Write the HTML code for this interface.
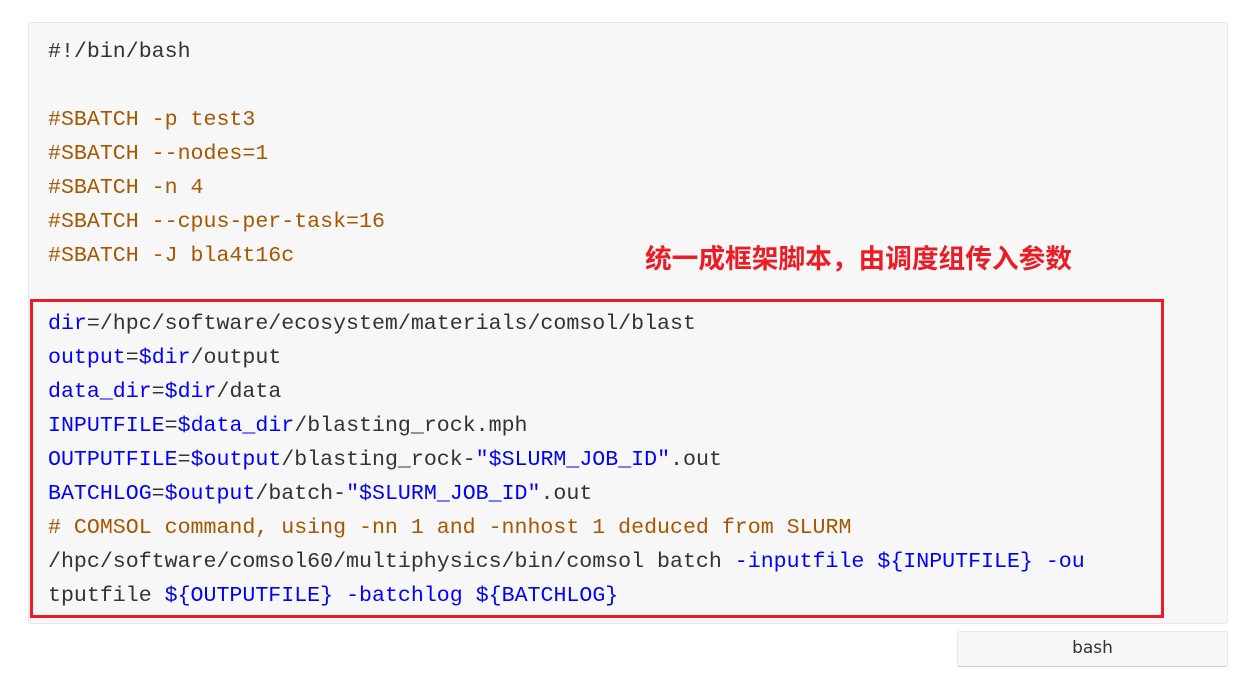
<!DOCTYPE html>
<html><head><meta charset="utf-8"><style>
body{margin:0;background:#fff;width:1239px;height:675px;position:relative;overflow:hidden}
.code{position:absolute;left:28px;top:22px;width:1198px;height:600px;background:#f7f7f7;border:1px solid #e6e6e6;border-radius:3px}
pre{margin:0;position:absolute;left:19px;top:12px;font-family:"Liberation Mono",monospace;font-size:21.6px;line-height:34px;color:#333}
.c{color:#a65700}.b{color:#0000ff}
.box{position:absolute;left:30px;top:299px;width:1128px;height:313px;border:3px solid #ed1c24}
.note{position:absolute;left:645px;top:237px;font-family:"Liberation Sans","Noto Sans CJK SC",sans-serif;font-weight:bold;font-size:26.7px;color:#ed1c24;text-shadow:0 0 2px #fff;white-space:nowrap;letter-spacing:0}
.btn{position:absolute;left:957px;top:631px;width:269px;height:34px;background:#f7f7f7;border:1px solid #e6e6e6;border-bottom-color:#c8cccc;border-radius:3px;font-family:"DejaVu Sans",sans-serif;font-size:17px;color:#333;text-align:center;line-height:33px}
</style></head><body>
<div class="code"><pre>#!/bin/bash

<span class="c">#SBATCH -p test3</span>
<span class="c">#SBATCH --nodes=1</span>
<span class="c">#SBATCH -n 4</span>
<span class="c">#SBATCH --cpus-per-task=16</span>
<span class="c">#SBATCH -J bla4t16c</span>

<span class="b">dir</span>=/hpc/software/ecosystem/materials/comsol/blast
<span class="b">output</span>=<span class="b">$dir</span>/output
<span class="b">data_dir</span>=<span class="b">$dir</span>/data
<span class="b">INPUTFILE</span>=<span class="b">$data_dir</span>/blasting_rock.mph
<span class="b">OUTPUTFILE</span>=<span class="b">$output</span>/blasting_rock-<span class="b">"$SLURM_JOB_ID"</span>.out
<span class="b">BATCHLOG</span>=<span class="b">$output</span>/batch-<span class="b">"$SLURM_JOB_ID"</span>.out
<span class="c"># COMSOL command, using -nn 1 and -nnhost 1 deduced from SLURM</span>
/hpc/software/comsol60/multiphysics/bin/comsol batch <span class="b">-inputfile</span> <span class="b">${INPUTFILE}</span> <span class="b">-ou</span>
tputfile <span class="b">${OUTPUTFILE}</span> <span class="b">-batchlog</span> <span class="b">${BATCHLOG}</span></pre></div>
<div class="box"></div>
<div class="note">统一成框架脚本，由调度组传入参数</div>
<div class="btn">bash</div>
</body></html>
